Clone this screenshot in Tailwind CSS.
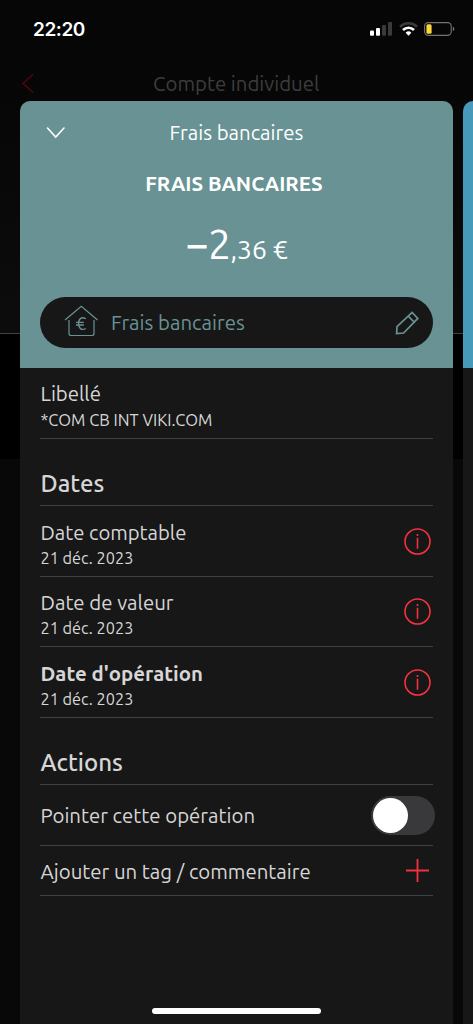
<!DOCTYPE html>
<html lang="fr">
<head>
<meta charset="utf-8">
<meta name="viewport" content="width=device-width, initial-scale=1">
<title>Frais bancaires</title>
<script src="https://cdn.jsdelivr.net/npm/@tailwindcss/browser@4"></script>
</head>
<body class="bg-black">
<div class="relative flex h-[1024px] w-[473px] flex-col overflow-hidden bg-[#060606] font-['Ubuntu','Noto_Sans',sans-serif] text-[#d6d6d6] whitespace-nowrap">

  <!-- Status bar -->
  <header class="flex h-[58px] shrink-0 items-center pl-[33px] pr-[18px]">
    <span class="font-['Inter',sans-serif] text-[19px] font-semibold leading-none tracking-[-0.45px] text-white">22:20</span>
    <div class="ml-auto flex items-center">
      <svg class="mr-[7px] h-[14px] w-[22px]" viewBox="0 0 22 14"><rect x="0" y="8.5" width="4" height="5.3" rx="1" fill="#fff"/><rect x="6" y="6" width="4" height="7.8" rx="1" fill="#fff"/><rect x="12" y="3" width="4" height="10.8" rx="1" fill="#3a3a3a"/><rect x="18" y="0" width="4" height="13.8" rx="1" fill="#3a3a3a"/></svg>
      <svg class="mr-[6px] h-[14px] w-[19px]" viewBox="0 0 19 14" fill="none"><path d="M1 4.7a12.3 12.3 0 0 1 17 0" stroke="#3a3a3a" stroke-width="2.6"/><path d="M4 8a8 8 0 0 1 11 0" stroke="#fff" stroke-width="2.6"/><path d="M6.6 10.7a4.2 4.2 0 0 1 5.8 0L9.5 13.7z" fill="#fff"/></svg>
      <svg class="h-[14px] w-[31px]" viewBox="0 0 31 14"><rect x=".6" y=".6" width="26.6" height="12.8" rx="3.6" fill="none" stroke="#737373" stroke-width="1.1"/><rect x="2.4" y="2.2" width="5.2" height="9.6" rx="1.5" fill="#fbd737"/><path d="M28.8 4.8c2 .6 2 3.8 0 4.4z" fill="#737373"/></svg>
    </div>
  </header>

  <!-- Dimmed page behind the sheet -->
  <div class="flex h-[276px] shrink-0 border-b border-[#414141] bg-gradient-to-b from-[#060606] to-[#0c0c0c]">
    <svg class="mt-[15px] ml-[21px] h-[20px] w-[13px]" viewBox="0 0 13 20" fill="none" stroke="#4d060f" stroke-width="1.5"><path d="M12.2 1 2 10.4 12.2 19.5"/></svg>
    <div class="mt-[12px] ml-[119px] h-[28px] text-[20.4px] leading-[28px] text-[#3d3d3d]">Compte individuel</div>
  </div>
  <div class="h-[125px] shrink-0 bg-black"></div>
  <div class="grow bg-[#080808]"></div>

  <!-- Operation sheets -->
  <div class="absolute inset-x-0 top-[101px] bottom-0 flex gap-[10px] pl-[20px]">
    <main class="flex w-[433px] shrink-0 flex-col overflow-hidden rounded-t-[10px] bg-[#171717]">
      <section class="flex h-[267px] shrink-0 flex-col bg-[#689294] px-[20px] text-white">
        <div class="relative flex h-[64px] justify-center">
          <svg class="absolute top-[25px] left-[6px] h-[13px] w-[20px]" viewBox="0 0 20 13" fill="none" stroke="#fff" stroke-width="1.6" stroke-linecap="round"><path d="m1.5 2 8.200 9L18 2"/></svg>
          <h1 class="text-[20.4px] leading-[64px]">Frais bancaires</h1>
        </div>
        <h2 class="h-[38px] pr-[5px] text-center text-[20.5px] font-bold leading-[37px]">FRAIS BANCAIRES</h2>
        <div class="flex h-[94px] items-baseline justify-center leading-[82px]"><span class="text-[41px] tracking-[-0.7px]"><span class="font-medium">−</span>2</span><span class="text-[27px] tracking-[-0.3px]">,36 €</span></div>
        <button class="flex h-[51px] items-center rounded-full bg-[#171717] pr-[14px] pl-[24px] text-[#689294]">
          <svg class="-mt-[3px] h-[32px] w-[34px]" viewBox="0 0 34 32" fill="none" stroke="#689294" stroke-width="1.2"><path d="M1 15 17.300 1.200 33.500 15M5 15v13.500a2 2 0 0 0 2 2h21a2 2 0 0 0 2-2V15"/><path d="M21.800 13.700c-4-2.200-7.200-.4-7.200 4.900s3.200 7.100 7.200 4.900M12 17.300h7.800M12 20h7.800" stroke-width="1.300"/></svg>
          <span class="ml-[13px] pt-[2px] text-[20.4px]">Frais bancaires</span>
          <svg class="ml-auto h-[24px] w-[24px]" viewBox="0 0 24 24" fill="none" stroke="#689294" stroke-width="1.700"><path d="M1.600 22.500 2 15.700 17.100 1.500 22.800 7.400 8.600 22zM13.300 5.100l5.700 5.900"/></svg>
        </button>
      </section>

      <section class="flex flex-col px-[20px]">
        <div class="h-[71px] border-b border-[#414141] pt-[12px] pl-[0.5px]">
          <div class="h-[28px] text-[20.4px] leading-[28px]">Libellé</div>
          <div class="text-[16.5px] leading-[24px]">*COM CB INT VIKI.COM</div>
        </div>
        <h3 class="h-[67px] border-b border-[#414141] pt-[29px] pl-[0.5px] text-[24px] font-medium leading-[32px]">Dates</h3>
        <div class="flex h-[71px] items-center border-b border-[#414141]">
          <div class="pt-[8px] pl-[0.5px]"><div class="text-[20.3px] leading-[26px]">Date comptable</div><div class="text-[16.3px] leading-[25px]">21 déc. 2023</div></div>
          <svg class="mr-[2px] ml-auto size-[27px]" viewBox="0 0 27 27" fill="none" stroke="#f2333f" stroke-width="1.600"><circle cx="13.500" cy="13.500" r="12.500"/><path d="M13.500 9.800v11M13.500 6v2"/></svg>
        </div>
        <div class="flex h-[70px] items-center border-b border-[#414141]">
          <div class="pt-[8px] pl-[0.5px]"><div class="text-[20.4px] leading-[26px]">Date de valeur</div><div class="text-[16.3px] leading-[25px]">21 déc. 2023</div></div>
          <svg class="mr-[2px] ml-auto size-[27px]" viewBox="0 0 27 27" fill="none" stroke="#f2333f" stroke-width="1.600"><circle cx="13.500" cy="13.500" r="12.500"/><path d="M13.500 9.800v11M13.500 6v2"/></svg>
        </div>
        <div class="flex h-[71px] items-center border-b border-[#414141]">
          <div class="pt-[8px] pl-[0.5px]"><div class="text-[20.4px] font-bold leading-[26px]">Date d'opération</div><div class="text-[16.3px] leading-[25px]">21 déc. 2023</div></div>
          <svg class="mr-[2px] ml-auto size-[27px]" viewBox="0 0 27 27" fill="none" stroke="#f2333f" stroke-width="1.600"><circle cx="13.500" cy="13.500" r="12.500"/><path d="M13.500 9.800v11M13.500 6v2"/></svg>
        </div>
        <h3 class="h-[67px] border-b border-[#414141] pt-[29px] pl-[0.5px] text-[24px] font-medium leading-[32px]">Actions</h3>
        <div class="flex h-[61px] items-center border-b border-[#414141]">
          <div class="pt-[2px] pl-[0.5px] text-[20.4px]">Pointer cette opération</div>
          <div class="-mr-[2px] ml-auto flex h-[39px] w-[64px] items-center rounded-full bg-[#39393b] pl-[2px]"><div class="size-[35px] rounded-full bg-white"></div></div>
        </div>
        <div class="flex h-[50px] items-center border-b border-[#414141]">
          <div class="pt-[4px] pl-[0.5px] text-[20.4px]">Ajouter un tag / commentaire</div>
          <svg class="mr-[4px] ml-auto size-[23px]" viewBox="0 0 23 23" stroke="#f2333f" stroke-width="1.800"><path d="M0 11.500h23M11.500 0v23"/></svg>
        </div>
      </section>
    </main>
    <aside class="w-[433px] shrink-0 overflow-hidden rounded-t-[10px] bg-[#171717]"><div class="h-[267px] bg-[#4699b8]"></div></aside>
  </div>

  <!-- Home indicator -->
  <div class="absolute bottom-[10px] left-[152px] h-[6px] w-[169px] rounded-full bg-white"></div>
</div>
</body>
</html>
